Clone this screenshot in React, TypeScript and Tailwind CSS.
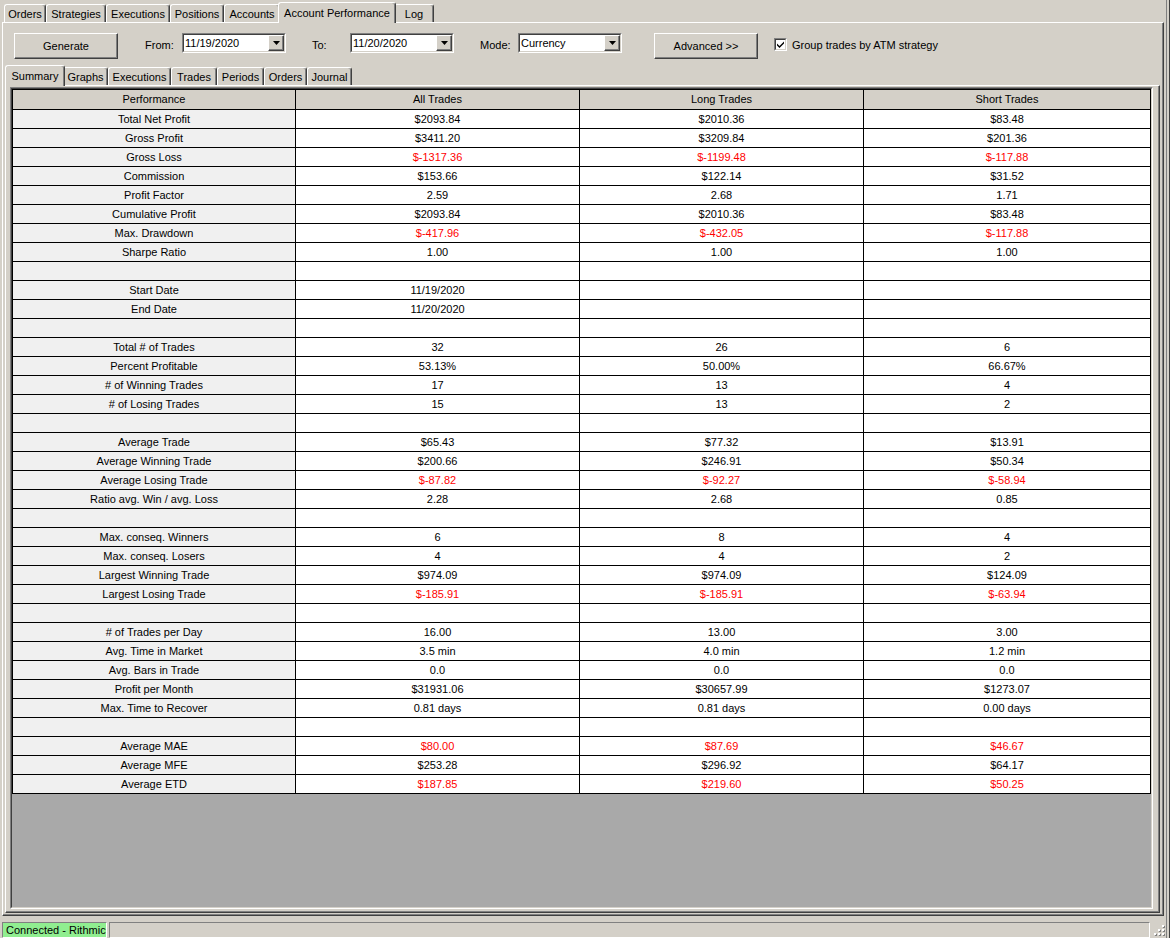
import React from 'react';

const raised =
  'border border-t-white border-l-white border-r-[#404040] border-b-[#404040] shadow-[inset_-1px_-1px_0_#808080]';

const topTabs = [
  { label: 'Orders', w: 'w-[42px]' },
  { label: 'Strategies', w: 'w-[60px]' },
  { label: 'Executions', w: 'w-[64px]' },
  { label: 'Positions', w: 'w-[54px]' },
  { label: 'Accounts', w: 'w-[56px]' },
  { label: 'Account Performance', w: 'w-[118px]', active: true },
  { label: 'Log', w: 'w-[40px]' },
];

const subTabs = [
  { label: 'Summary', w: 'w-[60px]', active: true },
  { label: 'Graphs', w: 'w-[45px]' },
  { label: 'Executions', w: 'w-[63px]' },
  { label: 'Trades', w: 'w-[46px]' },
  { label: 'Periods', w: 'w-[47px]' },
  { label: 'Orders', w: 'w-[43px]' },
  { label: 'Journal', w: 'w-[45px]' },
];

// [label, all, long, short, red values]
type Row = [string, string, string, string, boolean?];

const rows: Row[] = [
  ['Total Net Profit', '$2093.84', '$2010.36', '$83.48'],
  ['Gross Profit', '$3411.20', '$3209.84', '$201.36'],
  ['Gross Loss', '$-1317.36', '$-1199.48', '$-117.88', true],
  ['Commission', '$153.66', '$122.14', '$31.52'],
  ['Profit Factor', '2.59', '2.68', '1.71'],
  ['Cumulative Profit', '$2093.84', '$2010.36', '$83.48'],
  ['Max. Drawdown', '$-417.96', '$-432.05', '$-117.88', true],
  ['Sharpe Ratio', '1.00', '1.00', '1.00'],
  ['', '', '', ''],
  ['Start Date', '11/19/2020', '', ''],
  ['End Date', '11/20/2020', '', ''],
  ['', '', '', ''],
  ['Total # of Trades', '32', '26', '6'],
  ['Percent Profitable', '53.13%', '50.00%', '66.67%'],
  ['# of Winning Trades', '17', '13', '4'],
  ['# of Losing Trades', '15', '13', '2'],
  ['', '', '', ''],
  ['Average Trade', '$65.43', '$77.32', '$13.91'],
  ['Average Winning Trade', '$200.66', '$246.91', '$50.34'],
  ['Average Losing Trade', '$-87.82', '$-92.27', '$-58.94', true],
  ['Ratio avg. Win / avg. Loss', '2.28', '2.68', '0.85'],
  ['', '', '', ''],
  ['Max. conseq. Winners', '6', '8', '4'],
  ['Max. conseq. Losers', '4', '4', '2'],
  ['Largest Winning Trade', '$974.09', '$974.09', '$124.09'],
  ['Largest Losing Trade', '$-185.91', '$-185.91', '$-63.94', true],
  ['', '', '', ''],
  ['# of Trades per Day', '16.00', '13.00', '3.00'],
  ['Avg. Time in Market', '3.5 min', '4.0 min', '1.2 min'],
  ['Avg. Bars in Trade', '0.0', '0.0', '0.0'],
  ['Profit per Month', '$31931.06', '$30657.99', '$1273.07'],
  ['Max. Time to Recover', '0.81 days', '0.81 days', '0.00 days'],
  ['', '', '', ''],
  ['Average MAE', '$80.00', '$87.69', '$46.67', true],
  ['Average MFE', '$253.28', '$296.92', '$64.17'],
  ['Average ETD', '$187.85', '$219.60', '$50.25', true],
];

function Tab({ label, w, active }: { label: string; w: string; active?: boolean }) {
  if (active) {
    return (
      <div
        className={`${w} relative z-10 -mx-[2px] -mb-px flex h-[21px] items-start justify-center rounded-t-[3px] border-l border-t border-r border-l-white border-t-white border-r-[#404040] bg-[#d4d0c8] pt-[2px] shadow-[inset_-1px_0_0_#808080]`}
      >
        {label}
      </div>
    );
  }
  return (
    <div
      className={`${w} flex h-[18px] shrink-0 items-center justify-center rounded-t-[3px] border-l border-t border-r border-l-white border-t-white border-r-[#404040] pt-[1px] shadow-[inset_-1px_0_0_#808080]`}
    >
      {label}
    </div>
  );
}

function Combo({ value }: { value: string }) {
  return (
    <div className="h-[20px] w-[104px] border border-t-[#808080] border-l-[#808080] border-r-white border-b-white">
      <div className="flex h-full items-center border border-t-[#404040] border-l-[#404040] border-r-[#d4d0c8] border-b-[#d4d0c8] bg-white">
        <span className="flex-1 pl-[1px]">{value}</span>
        <div className={`${raised} flex h-[16px] w-[16px] items-center justify-center bg-[#d4d0c8]`}>
          <svg width="7" height="4" viewBox="0 0 7 4">
            <path d="M0 0h7L3.5 4z" fill="#000" />
          </svg>
        </div>
      </div>
    </div>
  );
}

function Sunken({ className, children }: { className?: string; children?: React.ReactNode }) {
  return (
    <div className={`border border-t-[#808080] border-l-[#808080] border-r-white border-b-white ${className ?? ''}`}>
      {children}
    </div>
  );
}

export default function App() {
  return (
    <div
      className="flex h-[938px] w-[1170px] flex-col overflow-hidden bg-[#d4d0c8] text-[11px] text-black shadow-[inset_-1px_0_0_#404040,inset_-3px_0_0_#d4d0c8,inset_-4px_0_0_#808080]"
      style={{ fontFamily: '"Liberation Sans", Arial, sans-serif' }}
    >
      {/* main tabs */}
      <div className="flex h-[22px] items-end pl-[4px]">
        {topTabs.map((t) => (
          <Tab key={t.label} {...t} />
        ))}
      </div>

      {/* outer panel */}
      <div className={`${raised} ml-[2px] flex w-[1162px] flex-1 flex-col pb-[2px] pl-[2px] pr-[3px]`}>
        {/* toolbar */}
        <div className="flex h-[42px] items-start pl-[9px] pt-[10px]">
          <button className={`${raised} h-[26px] w-[104px] bg-[#d4d0c8]`}>Generate</button>
          <span className="ml-[27px] mt-[4px] w-[37px]">From:</span>
          <Combo value="11/19/2020" />
          <span className="ml-[26px] mt-[4px] w-[38px]">To:</span>
          <Combo value="11/20/2020" />
          <span className="ml-[26px] mt-[4px] w-[38px]">Mode:</span>
          <Combo value="Currency" />
          <button className={`${raised} ml-[32px] h-[26px] w-[104px] bg-[#d4d0c8]`}>Advanced &gt;&gt;</button>
          <div className="ml-[16px] mt-[5px] h-[13px] w-[13px] border border-t-[#808080] border-l-[#808080] border-r-white border-b-white">
            <div className="flex h-full w-full items-center justify-center border border-t-[#404040] border-l-[#404040] border-r-[#d4d0c8] border-b-[#d4d0c8] bg-white">
              <svg width="7" height="7" viewBox="0 0 7 7">
                <path d="M0 2.5l2.5 2.5L7 0.5v2L2.5 7 0 4.5z" fill="#000" />
              </svg>
            </div>
          </div>
          <span className="ml-[5px] mt-[4px]">Group trades by ATM strategy</span>
        </div>

        {/* sub tabs */}
        <div className="flex h-[20px] items-end pl-[2px]">
          {subTabs.map((t) => (
            <Tab key={t.label} {...t} />
          ))}
        </div>

        {/* tab page */}
        <div className={`${raised} flex flex-1 flex-col pb-[3px] pl-[4px] pr-[6px] pt-[1px]`}>
          <Sunken className="flex flex-1 flex-col">
            <div className="flex flex-1 flex-col border border-t-[#404040] border-l-[#404040] border-r-[#d4d0c8] border-b-[#d4d0c8] bg-[#a9a9a9]">
              <div className="border-l border-t border-black">
                <div className="grid h-[20px] grid-cols-[283px_284px_284px_1fr] border-b border-black bg-[#d4d0c8]">
                  {['Performance', 'All Trades', 'Long Trades', 'Short Trades'].map((h) => (
                    <div key={h} className="flex items-center justify-center border-r border-black">
                      {h}
                    </div>
                  ))}
                </div>
                {rows.map(([label, all, long, short, red], i) => (
                  <div key={i} className="grid h-[19px] grid-cols-[283px_284px_284px_1fr] border-b border-black">
                    <div className="flex items-center justify-center border-r border-black bg-[#f0f0f0]">{label}</div>
                    {[all, long, short].map((v, j) => (
                      <div
                        key={j}
                        className={`flex items-center justify-center border-r border-black bg-white ${red ? 'text-[#ff0000]' : ''}`}
                      >
                        {v}
                      </div>
                    ))}
                  </div>
                ))}
              </div>
            </div>
          </Sunken>
        </div>
      </div>

      {/* status bar */}
      <div className="flex h-[22px] items-end gap-[2px] pl-[2px] pr-[4px]">
        <Sunken className="flex h-[16px] w-[105px] items-center bg-[#90ee90] pl-[3px]">Connected - Rithmic</Sunken>
        <Sunken className="h-[16px] flex-1" />
        <svg width="14" height="14" viewBox="0 0 14 14" className="mb-[1px]">
          {[
            [10, 2],
            [6, 6],
            [10, 6],
            [2, 10],
            [6, 10],
            [10, 10],
          ].map(([x, y]) => (
            <g key={`${x}-${y}`}>
              <rect x={x + 1} y={y + 1} width="2" height="2" fill="#808080" />
              <rect x={x} y={y} width="2" height="2" fill="#ffffff" />
            </g>
          ))}
        </svg>
      </div>
    </div>
  );
}
